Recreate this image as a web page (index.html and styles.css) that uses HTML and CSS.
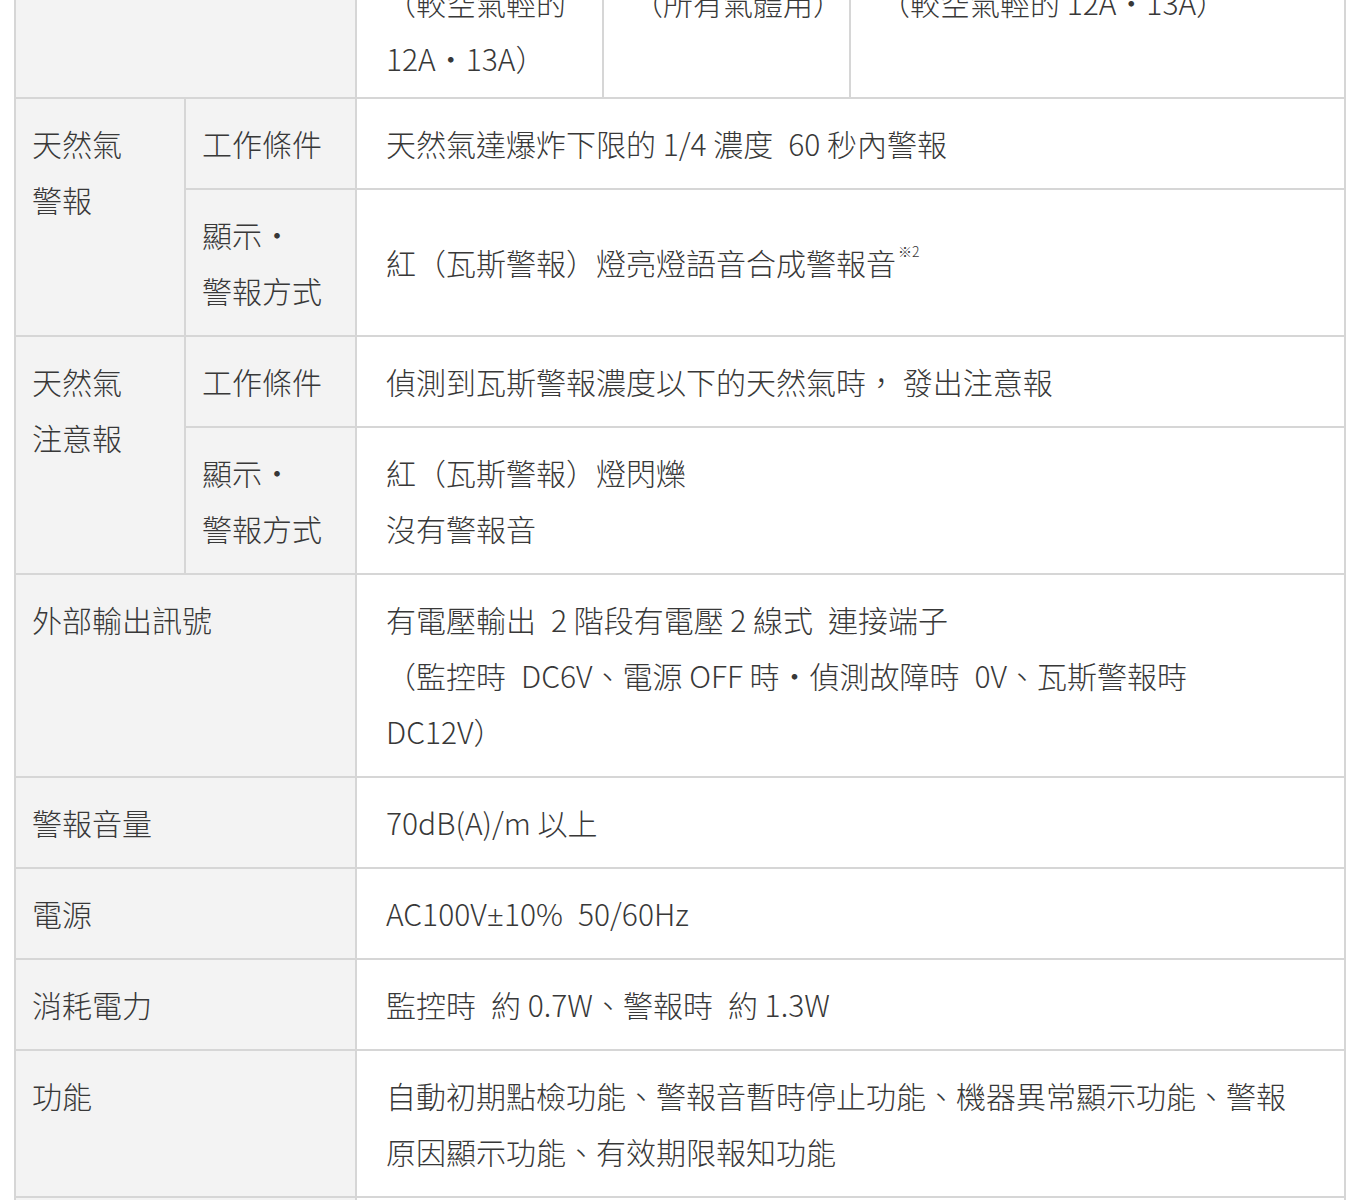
FILE: index.html
```html
<!DOCTYPE html>
<html lang="zh-Hant">
<head>
<meta charset="utf-8">
<title>規格</title>
<link rel="stylesheet" href="styles.css">
</head>
<body>
<div class="wrap">
<table class="spec">
  <colgroup>
    <col class="c1"><col class="c2"><col class="c3"><col class="c4"><col class="c5">
  </colgroup>
  <tbody>
    <tr class="top">
      <th colspan="2"></th>
      <td>（較空氣輕的<br>12A・13A）</td>
      <td>（所有氣體用）</td>
      <td>（較空氣輕的 12A・13A）</td>
    </tr>
    <tr>
      <th rowspan="2">天然氣<br>警報</th>
      <th>工作條件</th>
      <td colspan="3">天然氣達爆炸下限的 1/4 濃度&ensp;60 秒內警報</td>
    </tr>
    <tr>
      <th>顯示・<br>警報方式</th>
      <td colspan="3">紅（瓦斯警報）燈亮燈語音合成警報音<sup class="note">※2</sup></td>
    </tr>
    <tr>
      <th rowspan="2">天然氣<br>注意報</th>
      <th>工作條件</th>
      <td colspan="3">偵測到瓦斯警報濃度以下的天然氣時<span class="p">，</span> 發出注意報</td>
    </tr>
    <tr>
      <th>顯示・<br>警報方式</th>
      <td colspan="3">紅（瓦斯警報）燈閃爍<br>沒有警報音</td>
    </tr>
    <tr>
      <th colspan="2">外部輸出訊號</th>
      <td colspan="3">有電壓輸出&ensp;2 階段有電壓 2 線式&ensp;連接端子<br>（監控時&ensp;DC6V<span class="p">、</span>電源 OFF 時・偵測故障時&ensp;0V<span class="p">、</span>瓦斯警報時<br>DC12V）</td>
    </tr>
    <tr>
      <th colspan="2">警報音量</th>
      <td colspan="3">70dB(A)/m 以上</td>
    </tr>
    <tr>
      <th colspan="2">電源</th>
      <td colspan="3">AC100V<span class="lat">±</span>10%&ensp;50/60Hz</td>
    </tr>
    <tr>
      <th colspan="2">消耗電力</th>
      <td colspan="3">監控時&ensp;約 0.7W<span class="p">、</span>警報時&ensp;約 1.3W</td>
    </tr>
    <tr>
      <th colspan="2">功能</th>
      <td colspan="3">自動初期點檢功能<span class="p">、</span>警報音暫時停止功能<span class="p">、</span>機器異常顯示功能<span class="p">、</span>警報<br>原因顯示功能<span class="p">、</span>有效期限報知功能</td>
    </tr>
    <tr>
      <th colspan="2">尺寸</th>
      <td colspan="3">約 100mm</td>
    </tr>
  </tbody>
</table>
</div>
</body>
</html>
```
FILE: styles.css
```css
html, body {
  margin: 0;
  padding: 0;
  background: #ffffff;
}

body {
  font-family: "Noto Sans CJK TC", "Noto Sans CJK JP", sans-serif;
  font-weight: 300;
  color: #383838;
  font-size: 30px;
  line-height: 56px;
}

.wrap {
  padding: 0 15px 0 14px;
  margin-top: -44px;
}

.spec {
  width: 1330px;
  border-collapse: collapse;
  table-layout: fixed;
}

.c1 { width: 170px; }
.c2 { width: 171px; }
.c3 { width: 247px; }
.c4 { width: 247px; }
.c5 { width: 495px; }

.spec th,
.spec td {
  border: 2px solid #d6d6d6;
  font-weight: 300;
  text-align: left;
  padding: 16px 30px 17px 29px;
}

.spec th {
  background: #f3f3f3;
  vertical-align: top;
  padding-left: 16px;
  padding-right: 10px;
}

.spec td {
  vertical-align: middle;
}

.spec tr.top td {
  vertical-align: top;
  padding-bottom: 11px;
  padding-right: 10px;
}

.p {
  font-family: "Noto Sans CJK JP", "Noto Sans CJK TC", sans-serif;
}

.lat {
  font-family: "Noto Sans", "Open Sans", sans-serif;
  line-height: 0;
}

.note {
  font-size: 14px;
  line-height: 1;
  vertical-align: top;
  position: relative;
  top: 10px;
  margin-left: 2px;
}
```
